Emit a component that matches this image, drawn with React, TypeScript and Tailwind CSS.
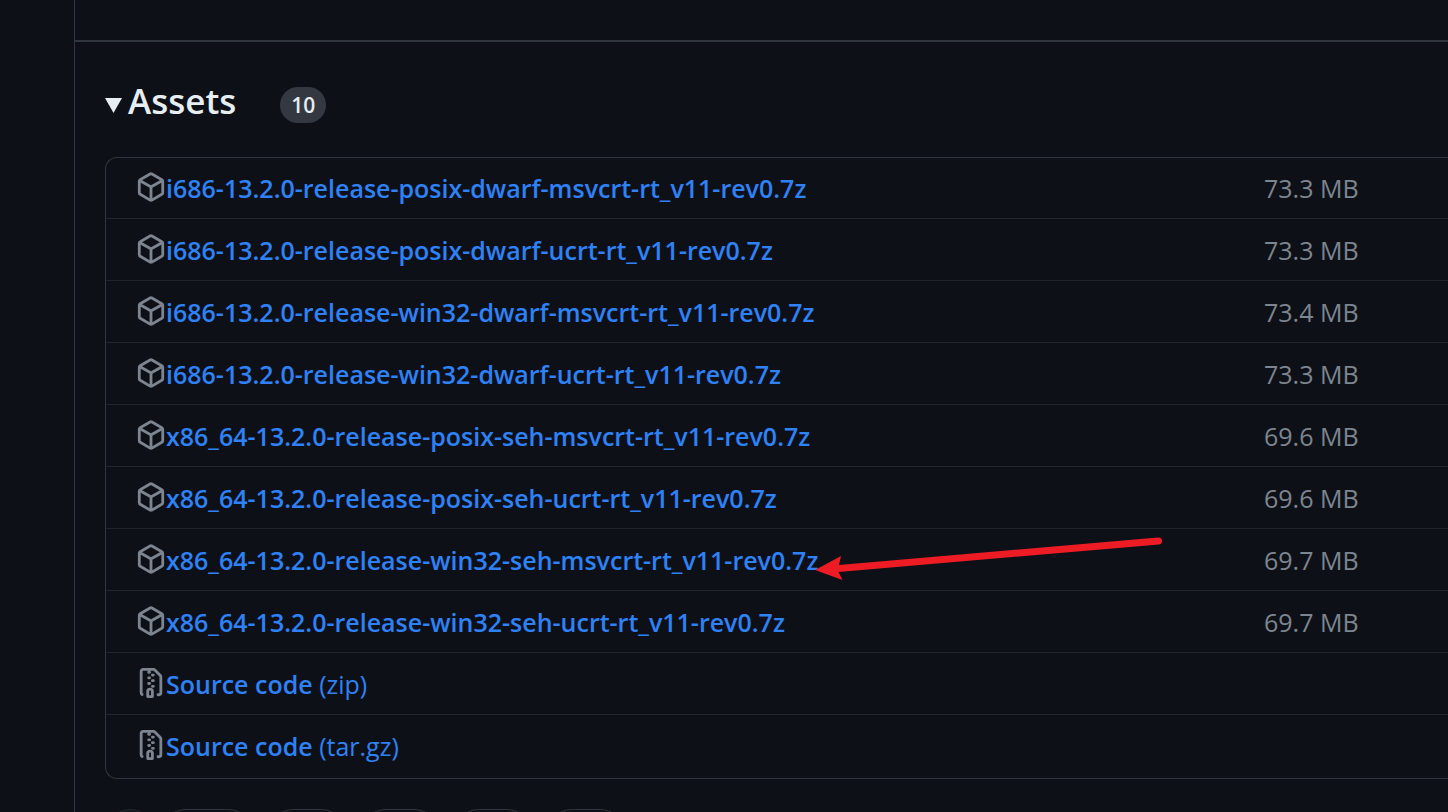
import React from 'react';

type Asset = { name: string; format?: string; size?: string };

const assets: Asset[] = [
  { name: 'i686-13.2.0-release-posix-dwarf-msvcrt-rt_v11-rev0.7z', size: '73.3 MB' },
  { name: 'i686-13.2.0-release-posix-dwarf-ucrt-rt_v11-rev0.7z', size: '73.3 MB' },
  { name: 'i686-13.2.0-release-win32-dwarf-msvcrt-rt_v11-rev0.7z', size: '73.4 MB' },
  { name: 'i686-13.2.0-release-win32-dwarf-ucrt-rt_v11-rev0.7z', size: '73.3 MB' },
  { name: 'x86_64-13.2.0-release-posix-seh-msvcrt-rt_v11-rev0.7z', size: '69.6 MB' },
  { name: 'x86_64-13.2.0-release-posix-seh-ucrt-rt_v11-rev0.7z', size: '69.6 MB' },
  { name: 'x86_64-13.2.0-release-win32-seh-msvcrt-rt_v11-rev0.7z', size: '69.7 MB' },
  { name: 'x86_64-13.2.0-release-win32-seh-ucrt-rt_v11-rev0.7z', size: '69.7 MB' },
  { name: 'Source code', format: '(zip)' },
  { name: 'Source code', format: '(tar.gz)' },
];

const PACKAGE_PATH =
  'm8.878.392 5.25 3.045c.54.314.872.89.872 1.514v6.098a1.75 1.75 0 0 1-.872 1.514l-5.25 3.045a1.75 1.75 0 0 1-1.756 0l-5.25-3.045A1.75 1.75 0 0 1 1 11.049V4.951c0-.624.332-1.201.872-1.514L7.122.392a1.75 1.75 0 0 1 1.756 0ZM7.875 1.69l-4.63 2.685L8 7.133l4.755-2.758-4.63-2.685a.248.248 0 0 0-.25 0ZM2.5 5.677v5.372c0 .09.047.171.125.216l4.625 2.683V8.432Zm6.25 8.271 4.625-2.683a.25.25 0 0 0 .125-.216V5.677L8.75 8.432Z';

const ZIP_PATH =
  'M3.5 1.75v11.5c0 .09.048.173.126.217a.75.75 0 0 1-.752 1.298A1.748 1.748 0 0 1 2 13.25V1.75C2 .784 2.784 0 3.75 0h5.586c.464 0 .909.185 1.237.513l2.914 2.914c.329.328.513.773.513 1.237v8.586A1.75 1.75 0 0 1 12.25 15h-.5a.75.75 0 0 1 0-1.5h.5a.25.25 0 0 0 .25-.25V4.664a.25.25 0 0 0-.073-.177L9.513 1.573a.25.25 0 0 0-.177-.073H7.25a.75.75 0 0 1 0 1.5h-.5a.75.75 0 0 1 0-1.5h-3a.25.25 0 0 0-.25.25Zm3.75 8.75h.5c.966 0 1.75.784 1.75 1.75v3a.75.75 0 0 1-.75.75h-2.5a.75.75 0 0 1-.75-.75v-3c0-.966.784-1.75 1.75-1.75ZM6 5.25a.75.75 0 0 1 .75-.75h.5a.75.75 0 0 1 0 1.5h-.5A.75.75 0 0 1 6 5.25Zm.75 2.25h.5a.75.75 0 0 1 0 1.5h-.5a.75.75 0 0 1 0-1.5ZM8 6.75A.75.75 0 0 1 8.75 6h.5a.75.75 0 0 1 0 1.5h-.5A.75.75 0 0 1 8 6.75ZM8.75 3h.5a.75.75 0 0 1 0 1.5h-.5a.75.75 0 0 1 0-1.5ZM8 9.75A.75.75 0 0 1 8.75 9h.5a.75.75 0 0 1 0 1.5h-.5A.75.75 0 0 1 8 9.75Zm-1 2.5v2.25h1v-2.25a.25.25 0 0 0-.25-.25h-.5a.25.25 0 0 0-.25.25Z';

function AssetIcon({ path }: { path: string }) {
  return (
    <svg viewBox="0 0 16 16" className="mb-0.5 size-[30px] shrink-0 fill-[#7d8590]" aria-hidden="true">
      <path d={path} />
    </svg>
  );
}

function Arrow() {
  return (
    <svg viewBox="0 0 350 44" className="absolute -top-1.5 left-full -ml-1.5 h-11 w-[350px]" aria-hidden="true">
      <path
        d="M3 34 29 20 27 29 346 1.500A3.500 3.500 0 0 1 347 8.500L26.500 36 30.500 44Z"
        fill="#ed1c24"
      />
    </svg>
  );
}

function AssetRow({ asset, marked }: { asset: Asset; marked: boolean }) {
  return (
    <li className="flex h-[62px] items-center border-t border-[#21262d] pl-[30px] first:h-[60px] first:border-t-0">
      <div className="flex min-w-0 flex-1 items-center">
        <AssetIcon path={asset.format ? ZIP_PATH : PACKAGE_PATH} />
        <a href="#assets" className="relative whitespace-nowrap text-[#2f81f7]">
          <span className="font-semibold">{asset.name}</span>
          {asset.format && <span> {asset.format}</span>}
          {marked && <Arrow />}
        </a>
      </div>
      {asset.size && <span className="w-46 shrink-0 text-[#7d8590]">{asset.size}</span>}
    </li>
  );
}

export default function App() {
  return (
    <div className="flex h-screen overflow-hidden bg-[#0d1117] pl-[74px] font-['Open_Sans','Noto_Sans',sans-serif] text-[25px] leading-9 text-[#e6edf3]">
      <main className="flex-1 border-l border-[#30363d]">
        <div className="h-[42px] border-b-2 border-[#30363d]" />
        <div className="pt-9 pl-[30px]">
          <details open>
            <summary className="flex list-none items-center">
              <svg viewBox="0 0 17 15" className="mt-2 h-[15px] w-[17px] fill-current" aria-hidden="true">
                <path d="M0 0H17L8.500 15Z" />
              </svg>
              <h2 className="ml-1.5 text-[35px] leading-[46px] font-semibold">Assets</h2>
              <span className="mt-2 ml-11 flex h-9 w-[46px] items-center justify-center rounded-full bg-[#343941] text-[21px] font-semibold">
                10
              </span>
            </summary>
            <ul id="assets" className="mt-[33px] rounded-l-xl border border-r-0 border-[#30363d] pb-0.5">
              {assets.map((asset, i) => (
                <AssetRow key={i} asset={asset} marked={i === 6} />
              ))}
            </ul>
          </details>
          <div className="mt-[30px] flex gap-[13px]" aria-hidden="true">
            <span className="-mr-2 size-[50px] rounded-full border border-[#21262d] bg-[#161b22]" />
            <span className="h-[52px] w-[94px] rounded-full border border-[#30363d]" />
            <span className="h-[52px] w-20 rounded-full border border-[#30363d]" />
            <span className="h-[52px] w-20 rounded-full border border-[#30363d]" />
            <span className="h-[52px] w-20 rounded-full border border-[#30363d]" />
            <span className="h-[52px] w-20 rounded-full border border-[#30363d]" />
          </div>
        </div>
      </main>
    </div>
  );
}
